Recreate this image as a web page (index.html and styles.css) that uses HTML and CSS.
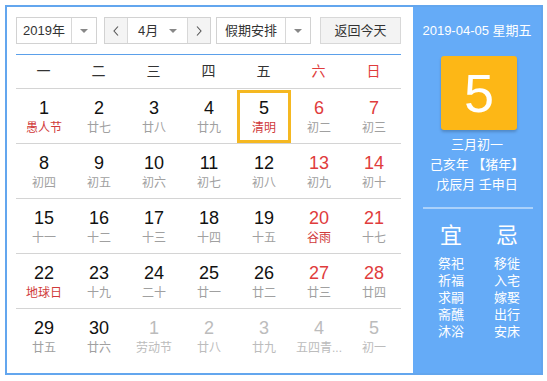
FILE: index.html
```html
<!DOCTYPE html>
<html lang="zh-CN">
<head>
    <meta charset="UTF-8">
    <title>万年历</title>
    <link rel="stylesheet" href="styles.css">
</head>
<body>

    <div class="calendar">
        <div class="main">
            <div class="toolbar">
                <div class="select year">
                    <span class="select-text">2019年</span>
                    <span class="select-arrow"><i class="caret"></i></span>
                </div>
                <div class="month-group">
                    <span class="nav-btn">
                        <svg width="6" height="10" viewBox="0 0 6 10"><polyline points="5,0.5 1,5 5,9.5" fill="none" stroke="#555" stroke-width="1.1"/></svg>
                    </span>
                    <div class="month-select">
                        <span class="month-text">4月</span>
                        <i class="caret"></i>
                    </div>
                    <span class="nav-btn">
                        <svg width="6" height="10" viewBox="0 0 6 10"><polyline points="1,0.5 5,5 1,9.5" fill="none" stroke="#555" stroke-width="1.1"/></svg>
                    </span>
                </div>
                <div class="select holiday">
                    <span class="select-text">假期安排</span>
                    <span class="select-arrow"><i class="caret"></i></span>
                </div>
                <div class="today-btn">返回今天</div>
            </div>

            <div class="weekdays">
                <div>一</div>
                <div>二</div>
                <div>三</div>
                <div>四</div>
                <div>五</div>
                <div class="weekend">六</div>
                <div class="weekend">日</div>
            </div>

            <div class="days" id="days"></div>
        </div>

        <div class="side">
            <div class="side-date">2019-04-05 星期五</div>
            <div class="big-day">5</div>
            <div class="side-lunar">
                <div>三月初一</div>
                <div>己亥年 【猪年】</div>
                <div>戊辰月 壬申日</div>
            </div>
            <div class="side-line"></div>
            <div class="yiji">
                <div class="yiji-col">
                    <div class="yiji-title">宜</div>
                    <div>祭祀</div>
                    <div>祈福</div>
                    <div>求嗣</div>
                    <div>斋醮</div>
                    <div>沐浴</div>
                </div>
                <div class="yiji-col">
                    <div class="yiji-title">忌</div>
                    <div>移徙</div>
                    <div>入宅</div>
                    <div>嫁娶</div>
                    <div>出行</div>
                    <div>安床</div>
                </div>
            </div>
        </div>
    </div>

    <script>
        // [day, lunar, weekend, festival, other month, today]
        const days = [
            [1, '愚人节', 0, 1], [2, '廿七'], [3, '廿八'], [4, '廿九'], [5, '清明', 0, 1, 0, 1], [6, '初二', 1], [7, '初三', 1],
            [8, '初四'], [9, '初五'], [10, '初六'], [11, '初七'], [12, '初八'], [13, '初九', 1], [14, '初十', 1],
            [15, '十一'], [16, '十二'], [17, '十三'], [18, '十四'], [19, '十五'], [20, '谷雨', 1, 1], [21, '十七', 1],
            [22, '地球日', 0, 1], [23, '十九'], [24, '二十'], [25, '廿一'], [26, '廿二'], [27, '廿三', 1], [28, '廿四', 1],
            [29, '廿五'], [30, '廿六'], [1, '劳动节', 0, 0, 1], [2, '廿八', 0, 0, 1], [3, '廿九', 0, 0, 1], [4, '五四青...', 0, 0, 1], [5, '初一', 0, 0, 1]
        ];

        const box = document.getElementById('days');
        days.forEach(d => {
            const cls = ['day'];
            if (d[2]) cls.push('weekend');
            if (d[3]) cls.push('festival');
            if (d[4]) cls.push('other');
            if (d[5]) cls.push('today');
            box.innerHTML += `<div class="${cls.join(' ')}"><div class="cell"><span class="num">${d[0]}</span><span class="lunar">${d[1]}</span></div></div>`;
        });
    </script>
</body>
</html>
```

FILE: styles.css
```css
body {
    margin: 0;
    padding: 0;
    background: #fff;
    font-family: 'Liberation Sans', 'Noto Sans CJK SC', sans-serif;
    color: #333;
}

.calendar {
    display: flex;
    width: 538px;
    height: 370px;
    margin: 5px;
    border: 2px solid #63a6ee;
    box-sizing: border-box;
}

.main {
    width: 406px;
    padding: 10px 0 0 9px;
    box-sizing: border-box;
    background: #fff;
}

.toolbar {
    display: flex;
    height: 27px;
    font-size: 13px;
}

.select {
    display: flex;
    height: 27px;
    border: 1px solid #d2d2d2;
    box-sizing: border-box;
    background: #fff;
}

.select-text {
    flex: 1;
    text-align: center;
    line-height: 25px;
}

.select-arrow {
    width: 24px;
    display: flex;
    justify-content: center;
    align-items: center;
    border-left: 1px solid #d8d8d8;
}

.caret {
    width: 0;
    height: 0;
    border-left: 4px solid transparent;
    border-right: 4px solid transparent;
    border-top: 4px solid #888;
}

.year {
    width: 81px;
    margin-right: 7px;
}

.month-group {
    display: flex;
    width: 107px;
    height: 27px;
    margin-right: 5px;
    border: 1px solid #d2d2d2;
    box-sizing: border-box;
}

.nav-btn {
    width: 22px;
    display: flex;
    justify-content: center;
    align-items: center;
    background: #f4f4f4;
}

.nav-btn:first-child {
    border-right: 1px solid #d8d8d8;
}

.nav-btn:last-child {
    border-left: 1px solid #d8d8d8;
}

.month-select {
    flex: 1;
    display: flex;
    align-items: center;
    padding: 0 10px 0 10px;
    background: #fff;
}

.month-text {
    flex: 1;
    line-height: 25px;
}

.holiday {
    width: 95px;
    margin-right: 9px;
}

.holiday .select-text {
    font-size: 13px;
}

.today-btn {
    width: 81px;
    height: 27px;
    line-height: 25px;
    text-align: center;
    border: 1px solid #d8d8d8;
    box-sizing: border-box;
    background: #f3f3f3;
}

.weekdays {
    display: grid;
    grid-template-columns: repeat(7, 55px);
    height: 35px;
    margin-top: 10px;
    border-top: 1px solid #5ba0ea;
    border-bottom: 1px solid #d4d4d4;
    box-sizing: border-box;
    width: 385px;
}

.weekdays div {
    text-align: center;
    line-height: 33px;
    font-size: 14px;
    color: #333;
}

.weekdays .weekend {
    color: #e03c3c;
}

.days {
    display: grid;
    grid-template-columns: repeat(7, 55px);
    grid-auto-rows: 55px;
    width: 385px;
}

.day {
    padding: 1px 0 0 1px;
    border-bottom: 1px solid #d4d4d4;
    box-sizing: border-box;
}

.day:nth-last-child(-n+7) {
    border-bottom: none;
}

.cell {
    height: 53px;
    width: 54px;
    display: flex;
    flex-direction: column;
    align-items: center;
    padding-top: 8px;
    box-sizing: border-box;
}

.today .cell {
    box-shadow: inset 0 0 0 3px #f5b821;
}

.num {
    font-size: 18px;
    line-height: 20px;
    color: #111;
}

.lunar {
    font-size: 12px;
    line-height: 20px;
    color: #a0a0a0;
    white-space: nowrap;
}

.weekend .num {
    color: #e03c3c;
}

.festival .lunar {
    color: #d03a3a;
}

.other .num,
.other .lunar {
    color: #bcbcbc;
}

.side {
    width: 128px;
    background: #65abf7;
    color: #fff;
    text-align: center;
    padding-top: 14px;
    box-sizing: border-box;
}

.side-date {
    font-size: 13px;
    line-height: 20px;
    white-space: nowrap;
}

.big-day {
    width: 76px;
    height: 74px;
    margin: 15px auto 0 28px;
    background: #fdb716;
    border-radius: 3px;
    box-shadow: 0 2px 3px rgba(0, 0, 0, 0.2);
    font-size: 54px;
    line-height: 74px;
    font-family: 'Liberation Sans', sans-serif;
}

.side-lunar {
    margin-top: 5px;
    font-size: 13px;
    line-height: 20px;
}

.side-line {
    width: 110px;
    height: 2px;
    margin: 12px auto 0 10px;
    background: rgba(255, 255, 255, 0.45);
}

.yiji {
    display: grid;
    grid-template-columns: 56px 56px;
    padding-left: 10px;
    margin-top: 12px;
}

.yiji-col {
    font-size: 13px;
    line-height: 17px;
}

.yiji-title {
    font-size: 22px;
    line-height: 30px;
    margin-bottom: 4px;
}
```
